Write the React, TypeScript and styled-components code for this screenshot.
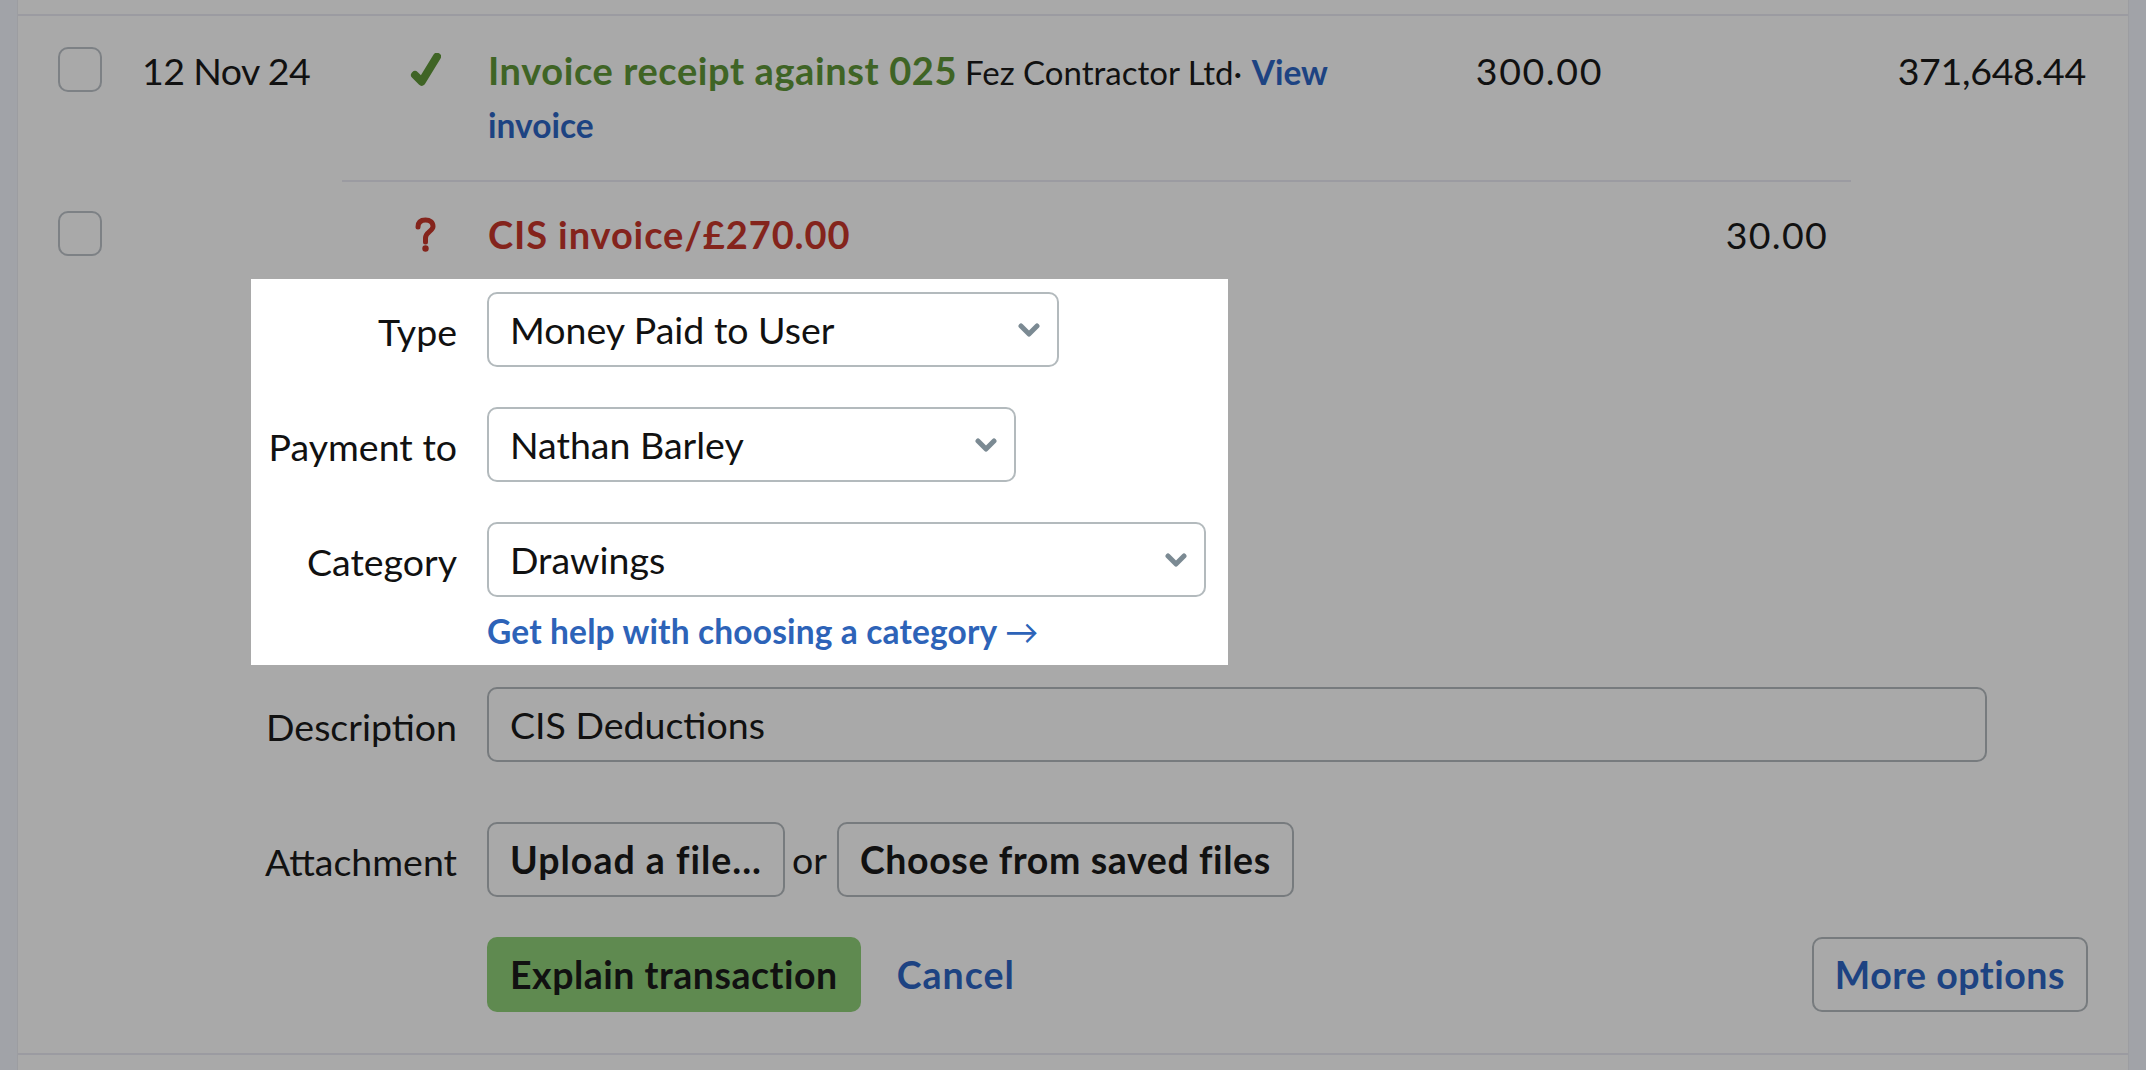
import React from "react";
import styled, { createGlobalStyle } from "styled-components";

const GlobalStyle = createGlobalStyle`
  html, body {
    margin: 0;
    padding: 0;
    height: 100%;
    background: #a9a9a9;
  }
  body {
    font-family: "Lato", "Noto Sans", sans-serif;
    font-size: 37.5px;
    color: #111;
    overflow: hidden;
  }
  a {
    text-decoration: none;
  }
`;

const Page = styled.div`
  display: flex;
  height: 1070px;
  background: #a1a3a8;
`;

const Gutter = styled.div<{ $w: number }>`
  flex: 0 0 ${({ $w }) => $w}px;
`;

const Main = styled.main`
  flex: 1;
  min-width: 0;
  background: #a9a9a9;
  border-left: 1px solid #9c9da1;
  border-right: 1px solid #9c9da1;
  padding-top: 14px;
`;

const Rule = styled.hr`
  height: 2px;
  margin: 0;
  border: 0;
  background: #9b9ba1;
`;

const InnerRule = styled(Rule)`
  margin: 0 277px 0 324px;
`;

const TxRow = styled.div`
  display: grid;
  grid-template-columns: 84px 250px 96px 852px 263px 225px 258px;
  box-sizing: border-box;
  padding: 31px 40px 0 40px;
  line-height: 48px;
`;

const FirstRow = styled(TxRow)`
  height: 164px;
`;

const SecondRow = styled(TxRow)`
  padding-top: 29px;
  height: 74px;
`;

const Checkbox = styled.span`
  display: block;
  width: 44px;
  height: 45px;
  box-sizing: border-box;
  border: 2px solid #7d8185;
  border-radius: 10px;
`;

const StatusCell = styled.span`
  padding-right: 30px;
  display: flex;
  justify-content: center;
  align-items: flex-start;
`;

const CheckIcon = styled.svg`
  width: 31px;
  height: 34px;
  margin-top: 6px;
`;

const QuestionIcon = styled.svg`
  width: 21px;
  height: 35px;
  margin-top: 6px;
`;

const Details = styled.div`
  line-height: 51px;
  margin-top: -2px;
`;

const Title = styled.span<{ $color: string; $track: number }>`
  font-weight: 700;
  font-size: 38px;
  letter-spacing: ${({ $track }) => $track}px;
  color: ${({ $color }) => $color};
`;

const Contact = styled.span`
  font-size: 33px;
  margin-left: 8px;
`;

const InlineLink = styled.a`
  font-weight: 700;
  font-size: 33.5px;
  color: #1d4382;
`;

const Figure = styled.span<{ $track: number }>`
  letter-spacing: ${({ $track }) => $track}px;
  white-space: nowrap;
`;

const Amount = styled(Figure)`
  text-align: right;
`;

const Form = styled.div`
  margin: 23px 40px 0 233px;
`;

const Spotlight = styled.div`
  width: 977px;
  box-sizing: border-box;
  height: 386px;
  padding-top: 13px;
  background: #fff;
`;

const FieldRow = styled.div<{ $gap: number }>`
  display: grid;
  grid-template-columns: 206px 1fr;
  column-gap: 30px;
  align-items: center;
  margin-bottom: ${({ $gap }) => $gap}px;
`;

const FirstPlainRow = styled(FieldRow)`
  margin-top: 22px;
`;

const Label = styled.label`
  text-align: right;
  padding-top: 4px;
  white-space: nowrap;
`;

const SelectWrap = styled.div<{ $width: number }>`
  position: relative;
  width: ${({ $width }) => $width}px;
  height: 75px;
`;

const Select = styled.select`
  appearance: none;
  width: 100%;
  height: 100%;
  box-sizing: border-box;
  padding: 0 60px 0 21px;
  border: 2px solid #b3babd;
  border-radius: 10px;
  background: #fff;
  font: inherit;
  color: #111;
`;

const Chevron = styled.svg`
  position: absolute;
  top: 31px;
  right: 19px;
  width: 22px;
  height: 15px;
  pointer-events: none;
`;

const HelpLink = styled.a`
  display: block;
  margin: 14px 0 0 236px;
  font-weight: 700;
  font-size: 33.5px;
  letter-spacing: 0.15px;
  line-height: 40px;
  color: #2d63b8;
`;

const Arrow = styled.span`
  font-weight: 400;
`;

const Input = styled.input`
  width: 1500px;
  height: 75px;
  box-sizing: border-box;
  padding: 0 21px;
  border: 2px solid #777b7e;
  border-radius: 10px;
  background: transparent;
  font: inherit;
  color: #111;
`;

const Buttons = styled.div`
  display: flex;
  align-items: center;
`;

const Button = styled.button<{ $track?: number }>`
  height: 75px;
  box-sizing: border-box;
  padding: 0 21px;
  border: 2px solid #777b7e;
  border-radius: 10px;
  background: transparent;
  font: inherit;
  font-weight: 700;
  letter-spacing: ${({ $track = 0.6 }) => $track}px;
  color: #111;
`;

const Or = styled.span`
  margin: 0 10px 0 7px;
`;

const PrimaryButton = styled(Button)`
  padding: 0 23px;
  border: 0;
  background: #5f8a50;
`;

const CancelLink = styled.a`
  margin-left: 36px;
  font-weight: 700;
  letter-spacing: 1px;
  color: #1d4382;
`;

const MoreButton = styled(Button)`
  margin-left: auto;
  color: #1d4382;
`;

function SelectField({ label, value, width, gap }: { label: string; value: string; width: number; gap: number }) {
  return (
    <FieldRow $gap={gap}>
      <Label>{label}</Label>
      <SelectWrap $width={width}>
        <Select defaultValue={value}>
          <option>{value}</option>
        </Select>
        <Chevron viewBox="0 0 22 15">
          <path d="M3 3l8 8 8-8" fill="none" stroke="#7b8a93" strokeWidth="5" strokeLinecap="round" strokeLinejoin="round" />
        </Chevron>
      </SelectWrap>
    </FieldRow>
  );
}

export default function App() {
  return (
    <Page>
      <GlobalStyle />
      <Gutter $w={17} />
      <Main>
        <Rule />
        <FirstRow>
          <Checkbox />
          <Figure $track={-0.6}>12 Nov 24</Figure>
          <StatusCell>
            <CheckIcon viewBox="0 0 31 34">
              <path d="M5 22l6.7 6.7L27 3.7" fill="none" stroke="#3f6425" strokeWidth="8" strokeLinecap="round" strokeLinejoin="round" />
            </CheckIcon>
          </StatusCell>
          <Details>
            <Title $color="#3f6425" $track={0.6}>Invoice receipt against 025</Title>
            <Contact>Fez Contractor Ltd·</Contact> <InlineLink href="#">View</InlineLink>{" "}
            <InlineLink href="#">invoice</InlineLink>
          </Details>
          <Amount $track={1.6}>300.00</Amount>
          <span />
          <Amount $track={-0.3}>371,648.44</Amount>
        </FirstRow>
        <InnerRule />
        <SecondRow>
          <Checkbox />
          <span />
          <StatusCell>
            <QuestionIcon viewBox="0 0 21 35">
              <path d="M3 10C3 5 6 3 10.5 3C15 3 18 5.5 18 9.5C18 14 10.5 15 10.5 21V25" fill="none" stroke="#84241c" strokeWidth="5" strokeLinecap="round" />
              <circle cx="10.5" cy="31.5" r="3.2" fill="#84241c" />
            </QuestionIcon>
          </StatusCell>
          <Details>
            <Title $color="#84241c" $track={0.9}>CIS invoice/£270.00</Title>
          </Details>
          <span />
          <Amount $track={1.3}>30.00</Amount>
          <span />
        </SecondRow>
        <Form>
          <Spotlight>
            <SelectField label="Type" value="Money Paid to User" width={572} gap={40} />
            <SelectField label="Payment to" value="Nathan Barley" width={529} gap={40} />
            <SelectField label="Category" value="Drawings" width={719} gap={0} />
            <HelpLink href="#">
              Get help with choosing a category <Arrow>→</Arrow>
            </HelpLink>
          </Spotlight>
          <FirstPlainRow $gap={60}>
            <Label>Description</Label>
            <Input defaultValue="CIS Deductions" />
          </FirstPlainRow>
          <FieldRow $gap={40}>
            <Label>Attachment</Label>
            <Buttons>
              <Button $track={1}>Upload a file...</Button>
              <Or>or</Or>
              <Button>Choose from saved files</Button>
            </Buttons>
          </FieldRow>
          <FieldRow $gap={41}>
            <span />
            <Buttons>
              <PrimaryButton $track={0.5}>Explain transaction</PrimaryButton>
              <CancelLink href="#">Cancel</CancelLink>
              <MoreButton $track={0.5}>More options</MoreButton>
            </Buttons>
          </FieldRow>
        </Form>
        <Rule />
      </Main>
      <Gutter $w={17} />
    </Page>
  );
}
